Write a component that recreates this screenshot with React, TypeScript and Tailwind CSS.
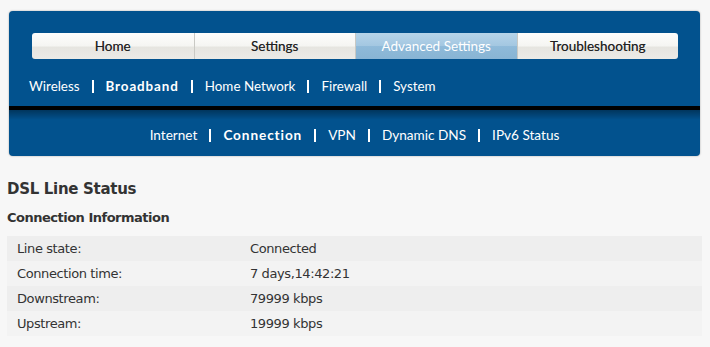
import React from 'react'

const tabs = ['Home', 'Settings', 'Advanced Settings', 'Troubleshooting']
const subNav = ['Wireless', 'Broadband', 'Home Network', 'Firewall', 'System']
const subSubNav = ['Internet', 'Connection', 'VPN', 'Dynamic DNS', 'IPv6 Status']

const rows = [
  ['Line state:', 'Connected'],
  ['Connection time:', '7 days,14:42:21'],
  ['Downstream:', '79999 kbps'],
  ['Upstream:', '19999 kbps'],
]

const NavRow = ({ items, active, className }: { items: string[]; active: string; className?: string }) => (
  <ul className={`flex items-center ${className ?? ''}`}>
    {items.map((item, i) => (
      <li key={item} className="flex items-center">
        {i > 0 && <span className="mx-[12px] h-[13px] w-[2px] bg-white" />}
        <span className={item === active ? 'font-bold tracking-[0.9px]' : ''}>{item}</span>
      </li>
    ))}
  </ul>
)

export default function App() {
  return (
    <div className="min-h-[347px] bg-[#f7f7f7] pt-[11px] text-[#333] font-['DejaVu_Sans',sans-serif]">
      {/* Kopfbereich */}
      <header className="ml-[9px] mr-[10px] overflow-hidden rounded-[4px] bg-[#02528e] shadow-[0_0_2px_rgba(0,0,0,0.35)] font-['Lato',sans-serif] text-white">
        <div className="pl-[23px] pr-[22px] pt-[22px]">
          <nav className="grid h-[26px] grid-cols-4 overflow-hidden rounded-[3px] text-[13.5px] leading-[16px]">
            {tabs.map((tab, i) => {
              const active = tab === 'Advanced Settings'
              return (
                <div
                  key={tab}
                  className={`flex items-center justify-center pb-[1px] ${i > 0 ? 'border-l border-[#c9c9c4]' : ''} ${
                    active
                      ? 'bg-[linear-gradient(#b6d4e9,#a3c7e1_50%,#8fbad9_52%,#88b4d4)] text-white'
                      : 'bg-[linear-gradient(#fdfdfc,#f5f5f2_50%,#e6e5e0_54%,#ecebe7)] text-[#222] [text-shadow:0_0_0.5px_rgba(0,0,0,0.5)]'
                  }`}
                >
                  {tab}
                </div>
              )
            })}
          </nav>
        </div>

        <NavRow
          items={subNav}
          active="Broadband"
          className="pl-[20px] pt-[19px] pb-[12px] text-[13.4px] leading-[16px]"
        />

        <div className="h-[4px] bg-black" />

        <div className="bg-[linear-gradient(to_bottom,rgba(0,0,0,0.35),rgba(0,0,0,0)_10px)]">
          <NavRow
            items={subSubNav}
            active="Connection"
            className="justify-center pt-[17px] pb-[13px] text-[13.6px] leading-[16px]"
          />
        </div>
      </header>

      {/* Inhalt */}
      <main className="px-[7px] pr-[8px]">
        <h1 className="mt-[24px] text-[15px] font-bold leading-[18px] tracking-[-0.3px]">DSL Line Status</h1>
        <h2 className="mt-[12px] text-[13px] font-bold leading-[16px] tracking-[-0.5px]">Connection Information</h2>
        <table className="mt-[10px] w-full border-collapse text-[13px] tracking-[-0.4px]">
          <tbody>
            {rows.map(([label, value], i) => (
              <tr key={label} className={`h-[25px] ${i % 2 === 0 ? 'bg-[#eeeeee]' : 'bg-[#f3f3f3]'}`}>
                <td className="w-[243px] pl-[10px] p-0 align-middle">{label}</td>
                <td className="p-0 align-middle">{value}</td>
              </tr>
            ))}
          </tbody>
        </table>
      </main>
    </div>
  )
}
